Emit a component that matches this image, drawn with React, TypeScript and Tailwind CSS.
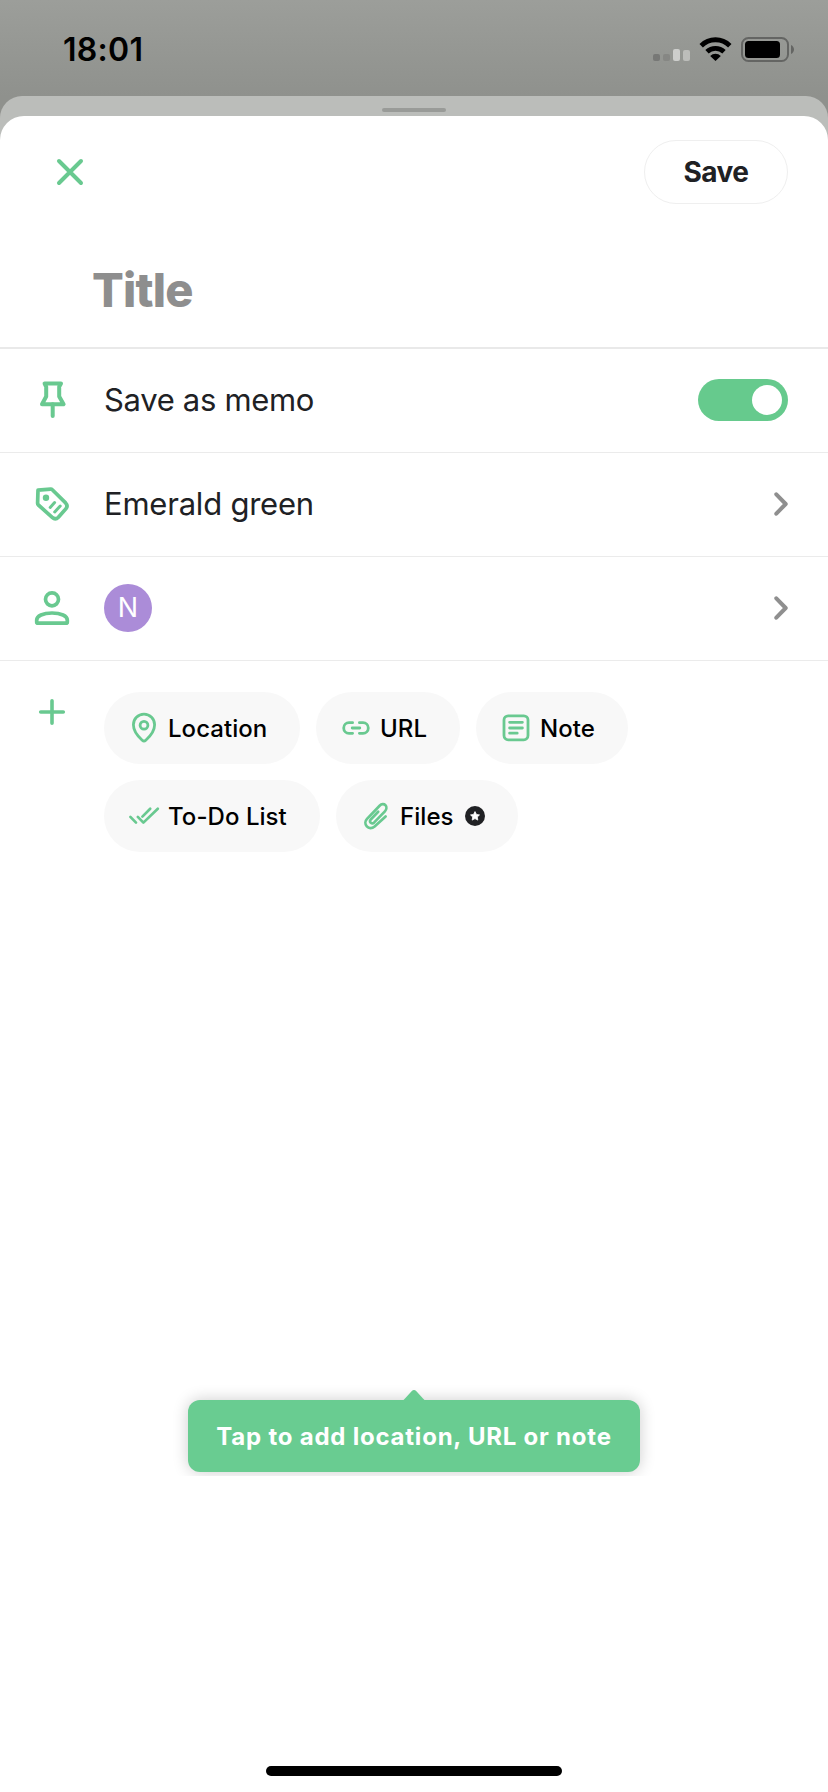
import { useState, type PropsWithChildren, type ReactNode } from "react";

const Icon = ({ size = 48, width = 3.7, children }: PropsWithChildren<{ size?: number; width?: number }>) => (
  <svg
    width={size}
    height={size}
    viewBox={`0 0 ${size} ${size}`}
    fill="none"
    stroke="#69c990"
    strokeWidth={width}
    strokeLinecap="round"
    strokeLinejoin="round"
    className="shrink-0"
  >
    {children}
  </svg>
);

const PinIcon = () => (
  <Icon width={4}>
    <path d="M16.6 6.6h16.4L31.2 9.8V19.5L35.6 27.2H14L18.2 19.5V9.8Z" />
    <path d="M24.7 27.3V39" />
  </Icon>
);

const TagIcon = () => (
  <Icon>
    <path d="M10 9.2L22.6 8.2Q23.6 8.1 24.3 8.8L37.6 21.9Q40.4 24.9 37.8 27.9L30.4 36.2Q27.4 39.2 24.2 36.4L10.4 24Q9.6 23.2 9.6 22.2Z" />
    <circle cx="18" cy="16.7" r="3.2" fill="#69c990" stroke="none" />
    <path d="M22.2 26.4L26.6 21.6M26.7 31L32.2 25" strokeWidth="3" />
  </Icon>
);

const PersonIcon = () => (
  <Icon>
    <circle cx="24" cy="14.3" r="6.5" />
    <path d="M10 38.2H38Q39.3 38.2 39.3 36.9V35C39.3 31 33 28 24 28S8.7 31 8.7 35V36.9Q8.7 38.2 10 38.2Z" />
  </Icon>
);

const LocationIcon = () => (
  <Icon size={32} width={2.8}>
    <path d="M16 2.2C10 2.2 5.4 6.9 5.4 12.8 5.4 19.5 10 24.5 14.2 28.2Q16 29.8 17.8 28.2C22 24.5 26.6 19.5 26.6 12.8 26.6 6.9 22 2.2 16 2.2Z" />
    <circle cx="16" cy="13.3" r="3.9" />
  </Icon>
);

const LinkIcon = () => (
  <Icon size={32} width={2.8}>
    <path d="M12.6 10.7H9A5.3 5.3 0 0 0 9 21.3H12.6M19.4 10.7H23A5.3 5.3 0 0 1 23 21.3H19.4M12.2 16H19.8" />
  </Icon>
);

const NoteIcon = () => (
  <Icon size={32} width={2.8}>
    <rect x="4" y="3.8" width="24" height="24" rx="4.2" />
    <path d="M9.6 10.3H22.4M9.6 16H22.4M9.6 21.2H17.2" />
  </Icon>
);

const TodoIcon = () => (
  <Icon size={32} width={2.7}>
    <path d="M2.4 16.9L8 22.6M9.8 16.9L15.4 22.6L29.8 8.8M14.4 16.6L22.2 8.8" />
  </Icon>
);

const ClipIcon = () => (
  <Icon size={32} width={2.7}>
    <path d="M25.6 16.4L14.6 26.4C11.8 28.8 8.6 28.4 6.8 26.4 4.8 24.2 5 21 7 18.9L19.6 5.8C21.6 3.7 24 3.7 25.4 5.2 26.9 6.8 26.6 9.6 24.9 11.4L14.2 22.4C12.9 23.6 11.4 23.6 10.6 22.7 9.8 21.8 9.9 20.4 11 19.2L18.2 11.8" />
  </Icon>
);

const PremiumBadge = () => (
  <svg width="20" height="20" viewBox="0 0 20 20" className="ml-[3px] shrink-0">
    <circle cx="10" cy="10" r="10" fill="#202124" />
    <path
      d="M10 5.6L11.4 8.4L14.5 8.9L12.3 11L12.8 14.1L10 12.6L7.2 14.1L7.7 11L5.5 8.9L8.6 8.4Z"
      fill="#fff"
      stroke="#fff"
      strokeWidth="0.8"
      strokeLinejoin="round"
    />
  </svg>
);

const Chevron = () => (
  <svg width="14" height="24" viewBox="0 0 14 24" fill="none" stroke="#8f8f8f" strokeWidth="4" strokeLinecap="round" strokeLinejoin="round">
    <path d="M2.3 2.3L11.7 12L2.3 21.7" />
  </svg>
);

const StatusBar = () => (
  <div className="flex h-24 items-start justify-between bg-linear-to-b from-[#9c9e9a] to-[#8f918d] pl-[63px] pr-[34px]">
    <p className="mt-[33px] text-[32px]/[34px] font-semibold tracking-[0.3px] text-black">18:01</p>
    <div className="mt-[37px] flex">
      <div className="mr-[9px] flex h-6 items-end gap-[3px]">
        <span className="h-[7px] w-[7px] rounded-[2px] bg-[#777876]" />
        <span className="h-[7px] w-[7px] rounded-[2px] bg-[#868784]" />
        <span className="h-3 w-[7px] rounded-[2px] bg-[#cdcecc]" />
        <span className="h-[11px] w-[7px] rounded-[2px] bg-[#bcbdba]" />
      </div>
      <svg width="33" height="24" viewBox="0 0 33 24" fill="none" stroke="#000" strokeWidth="4.8" className="mr-[9px]">
        <path d="M2.2 8.7A20.2 20.2 0 0 1 30.8 8.7" />
        <path d="M8 14.8A12.2 12.2 0 0 1 25 14.8" />
        <path d="M11.2 18.9A7.6 7.6 0 0 1 21.8 18.9L16.5 24Z" fill="#000" stroke="none" />
      </svg>
      <svg width="53" height="25" viewBox="0 0 53 25">
        <rect x="1" y="1" width="46" height="23" rx="6.5" fill="none" stroke="#646563" strokeWidth="2" />
        <rect x="4" y="4" width="35" height="17" rx="3.5" fill="#000" />
        <path d="M50 8C52 9 53 10.6 53 12.5S52 16 50 17Z" fill="#646563" />
      </svg>
    </div>
  </div>
);

const Row = ({ icon, children }: PropsWithChildren<{ icon: ReactNode }>) => (
  <div className="flex h-[104px] items-center border-b border-[#ebebeb] pb-px pl-7 pr-10">
    <div className="pt-0.5">{icon}</div>
    <div className="ml-7 flex flex-1 items-center justify-between">{children}</div>
  </div>
);

const Chip = ({ icon, className, children }: PropsWithChildren<{ icon: ReactNode; className: string }>) => (
  <button className={"flex h-[72px] items-center gap-2 rounded-full bg-[#f8f8f8] pl-6 text-[24px] font-medium tracking-[0.05px] text-black " + className}>
    {icon}
    {children}
  </button>
);

const Toggle = ({ on, onChange }: { on: boolean; onChange: (on: boolean) => void }) => (
  <button
    role="switch"
    aria-checked={on}
    onClick={() => onChange(!on)}
    className={"flex h-[42px] w-[90px] items-center rounded-full p-1.5 " + (on ? "justify-end bg-[#66ca8d]" : "justify-start bg-gray-300")}
  >
    <span className="size-[30px] rounded-full bg-white" />
  </button>
);

export default function App() {
  const [memo, setMemo] = useState(true);

  return (
    <div className="flex h-[1792px] w-[828px] flex-col overflow-hidden bg-[#8f918d] font-[Inter,sans-serif] text-[#202124]">
      <StatusBar />
      <div className="flex flex-1 flex-col rounded-t-[22px] bg-[#bbbdba]">
        <div className="flex h-5 justify-center pt-3">
          <div className="h-1 w-16 rounded-full bg-[#999b98]" />
        </div>
        <main className="flex flex-1 flex-col rounded-t-[24px] bg-white">
          <header className="flex h-28 items-center justify-between pl-[46px] pr-10">
            <Icon width={4}>
              <path d="M13 13L35 35M35 13L13 35" />
            </Icon>
            <button className="h-16 w-36 rounded-full border border-[#efefef] text-[28px] font-bold tracking-[-0.5px]">Save</button>
          </header>
          <div className="flex h-[121px] items-center border-b-2 border-[#e9e9e9] pl-[92px] pt-[5px]">
            <h1 className="text-[47px] font-extrabold tracking-[-0.8px] text-[#8e8e8e]">Title</h1>
          </div>

          <Row icon={<PinIcon />}>
            <p className="pt-px text-[31px] tracking-[-0.32px]">Save as memo</p>
            <Toggle on={memo} onChange={setMemo} />
          </Row>
          <Row icon={<TagIcon />}>
            <p className="pt-px text-[31px] tracking-[-0.22px]">Emerald green</p>
            <Chevron />
          </Row>
          <Row icon={<PersonIcon />}>
            <div className="flex size-12 items-center justify-center rounded-full bg-[#ab8cd8] pt-px text-[27px] text-white">N</div>
            <Chevron />
          </Row>

          <div className="flex pl-7 pt-[27px]">
            <Icon width={3.6}>
              <path d="M24 12.7V35.3M12.7 24H35.3" />
            </Icon>
            <div className="ml-7 mt-1 flex w-[600px] flex-wrap gap-4">
              <Chip icon={<LocationIcon />} className="w-[196px]"><span className="pt-0.5">Location</span></Chip>
              <Chip icon={<LinkIcon />} className="w-36"><span className="pt-0.5">URL</span></Chip>
              <Chip icon={<NoteIcon />} className="w-[152px]"><span className="pt-0.5">Note</span></Chip>
              <Chip icon={<TodoIcon />} className="w-[216px]"><span className="pt-0.5">To-Do List</span></Chip>
              <Chip icon={<ClipIcon />} className="w-[182px]">
                <span className="pt-0.5">Files</span>
                <PremiumBadge />
              </Chip>
            </div>
          </div>

          {/* clipped a few px below the bubble, so the shadow ends flat */}
          <div className="mt-auto flex h-[116px] justify-center overflow-hidden pt-10">
            <div className="relative flex h-[72px] w-[452px] items-center justify-center rounded-xl bg-[#69cc91] shadow-[0_0_16px_rgba(0,0,0,0.2)]">
              <svg width="24" height="11" viewBox="0 0 24 11" className="absolute -top-[10px] left-[214px]">
                <path d="M0 11Q1.5 10 3 8.5L9.6 1.2Q12 -1 14.4 1.2L21 8.5Q22.5 10 24 11Z" fill="#69cc91" />
              </svg>
              <p className="whitespace-nowrap pt-0.5 text-[24px] font-bold tracking-[0.78px] text-white">Tap to add location, URL or note</p>
            </div>
          </div>
          <div className="mt-[290px] flex h-[26px] justify-center">
            <div className="h-2.5 w-[296px] rounded-full bg-black" />
          </div>
        </main>
      </div>
    </div>
  );
}
